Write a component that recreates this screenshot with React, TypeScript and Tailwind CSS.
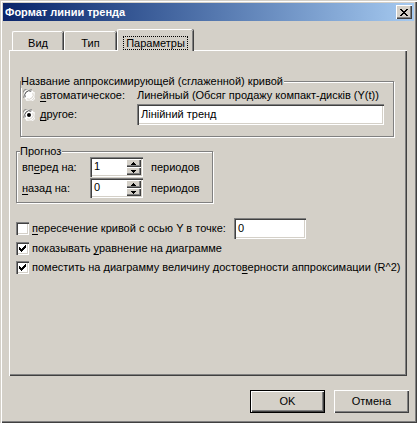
import React from "react";

const raised =
  "shadow-[inset_1px_1px_0_#ffffff,inset_-1px_-1px_0_#404040,inset_-2px_-2px_0_#808080]";
const sunken =
  "shadow-[inset_1px_1px_0_#808080,inset_2px_2px_0_#404040,inset_-1px_-1px_0_#ffffff,inset_-2px_-2px_0_#d4d0c8]";
const etched =
  "border border-[#808080] shadow-[inset_1px_1px_0_#ffffff,1px_1px_0_#ffffff]";

const U = ({ children }: { children: React.ReactNode }) => (
  <span className="underline underline-offset-[2px]">{children}</span>
);

const Radio = ({ checked }: { checked?: boolean }) => (
  <svg width="12" height="12" viewBox="0 0 12 12" className="shrink-0">
    <circle cx="6" cy="6" r="5.5" fill="#ffffff" />
    <path d="M1.2 9 A5.5 5.5 0 0 1 9 1.2" fill="none" stroke="#808080" strokeWidth="1" />
    <path d="M2.2 8.2 A4.5 4.5 0 0 1 8.2 2.2" fill="none" stroke="#404040" strokeWidth="1" />
    <path d="M10.8 3 A5.5 5.5 0 0 1 3 10.8" fill="none" stroke="#ffffff" strokeWidth="1" />
    <path d="M9.8 3.8 A4.5 4.5 0 0 1 3.8 9.8" fill="none" stroke="#d4d0c8" strokeWidth="1" />
    {checked && <circle cx="6" cy="6" r="2" fill="#000000" />}
  </svg>
);

const Check = ({ checked }: { checked?: boolean }) => (
  <div className={`w-[13px] h-[13px] bg-white shrink-0 ${sunken} flex items-center justify-center`}>
    {checked && (
      <svg width="7" height="7" viewBox="0 0 7 7">
        <path d="M0 2h1v1h1v1h1v-1h1v-1h1v-1h1v-1h1v3h-1v1h-1v1h-1v1h-1v1h-1v-1h-1v-1h-1z" fill="#000" />
      </svg>
    )}
  </div>
);

const Spin = ({ value }: { value: string }) => (
  <div className={`w-[53px] h-[20px] bg-white flex ${sunken}`}>
    <span className="flex-1 pl-[4px] pt-[3px] leading-[13px]">{value}</span>
    <div className="flex flex-col py-[2px] pr-[2px]">
      <div className={`w-[15px] h-[8px] bg-[#d4d0c8] flex items-center justify-center ${raised}`}>
        <svg width="5" height="3" viewBox="0 0 5 3">
          <path d="M2 0h1v1h1v1h1v1h-5v-1h1v-1h1z" fill="#000" />
        </svg>
      </div>
      <div className={`w-[15px] h-[8px] bg-[#d4d0c8] flex items-center justify-center ${raised}`}>
        <svg width="5" height="3" viewBox="0 0 5 3">
          <path d="M0 0h5v1h-1v1h-1v1h-1v-1h-1v-1h-1z" fill="#000" />
        </svg>
      </div>
    </div>
  </div>
);

export default function App() {
  return (
    <div
      className={`w-[417px] h-[423px] bg-[#d4d0c8] flex flex-col text-[11px] leading-[13px] text-black font-['Liberation_Sans',Arial,sans-serif] shadow-[inset_1px_1px_0_#d4d0c8,inset_2px_2px_0_#ffffff,inset_-1px_-1px_0_#404040,inset_-2px_-2px_0_#808080]`}
    >
      {/* Title bar */}
      <div className="mx-[3px] mt-[3px] h-[18px] flex items-center bg-linear-to-r from-[#0a246a] to-[#a6caf0]">
        <span className="pl-[2px] text-white font-bold text-[11px]">Формат линии тренда</span>
        <div className={`ml-auto mr-[2px] w-[16px] h-[14px] bg-[#d4d0c8] flex items-center justify-center ${raised}`}>
          <svg width="8" height="7" viewBox="0 0 8 7">
            <path
              d="M0 0h2v1h1v1h2v-1h1v-1h2v1h-1v1h-1v1h-1v1h1v1h1v1h1v1h-2v-1h-1v-1h-2v1h-1v1h-2v-1h1v-1h1v-1h1v-1h-1v-1h-1v-1h-1z"
              fill="#000"
            />
          </svg>
        </div>
      </div>

      {/* Tabs */}
      <div className="mt-[8px] ml-[12px] h-[21px] flex items-end">
        <div className="w-[51px] h-[19px] pt-[5px] text-center rounded-t-[2px] border-l border-t border-white shadow-[inset_-1px_0_0_#808080,1px_0_0_#404040]">
          Вид
        </div>
        <div className="ml-[1px] w-[52px] h-[19px] pt-[5px] text-center rounded-t-[2px] border-l border-t border-white shadow-[inset_-1px_0_0_#808080,1px_0_0_#404040]">
          Тип
        </div>
        <div className="relative z-10 -mb-px ml-[1px] w-[76px] h-[22px] pt-[6px] flex justify-center items-start bg-[#d4d0c8] rounded-t-[2px] border-l border-t border-white shadow-[inset_-1px_0_0_#808080,1px_0_0_#404040]">
          <span className="h-[14px] px-[2px] border border-dotted border-black leading-[12px]">Параметры</span>
        </div>
      </div>

      {/* Panel */}
      <div className="ml-[9px] w-[398px] h-[326px] flex flex-col shadow-[inset_1px_1px_0_#ffffff,inset_-1px_-1px_0_#404040,inset_-2px_-2px_0_#808080]">
        {/* Group 1 */}
        <div className={`relative ml-[11px] mt-[31px] w-[374px] h-[56px] ${etched}`}>
          <span className="absolute -top-[7px] left-0 bg-[#d4d0c8] pr-[1px]">
            Название аппроксимирующей (сглаженной) кривой
          </span>
          <div className="pl-[2px] pt-[6px] flex items-center h-[20px]">
            <Radio />
            <span className="ml-[5px] w-[97px]">
              <U>а</U>втоматическое:
            </span>
            <span>Линейный (Обсяг продажу компакт-дисків (Y(t))</span>
          </div>
          <div className="pl-[2px] mt-[2px] flex items-center h-[21px]">
            <Radio checked />
            <span className="ml-[5px] w-[97px]">
              <U>д</U>ругое:
            </span>
            <div className={`w-[247px] h-[21px] bg-white pl-[4px] pt-[4px] ${sunken}`}>Лінійний тренд</div>
          </div>
        </div>

        {/* Group 2 */}
        <div className={`relative ml-[7px] mt-[14px] w-[197px] h-[52px] ${etched}`}>
          <span className="absolute -top-[7px] left-[3px] bg-[#d4d0c8] pr-[1px]">Прогноз</span>
          <div className="pl-[5px] pt-[5px] flex items-center">
            <span className="w-[68px]">
              вп<U>е</U>ред на:
            </span>
            <Spin value="1" />
            <span className="ml-[8px]">периодов</span>
          </div>
          <div className="pl-[5px] mt-[1px] flex items-center">
            <span className="w-[68px]">
              <U>н</U>азад на:
            </span>
            <Spin value="0" />
            <span className="ml-[8px]">периодов</span>
          </div>
        </div>

        {/* Checkboxes */}
        <div className="ml-[7px] mt-[15px] flex flex-col">
          <div className="h-[21px] flex items-center">
            <Check />
            <span className="ml-[3px]">
              <U>п</U>ересечение кривой с осью Y в точке:
            </span>
            <div className={`ml-[8px] w-[72px] h-[21px] bg-white pl-[4px] pt-[4px] ${sunken}`}>0</div>
          </div>
          <div className="h-[19px] flex items-center">
            <Check checked />
            <span className="ml-[3px]">
              показывать <U>у</U>равнение на диаграмме
            </span>
          </div>
          <div className="h-[19px] flex items-center">
            <Check checked />
            <span className="ml-[3px]">
              поместить на диаграмму величину досто<U>в</U>ерности аппроксимации (R^2)
            </span>
          </div>
        </div>
      </div>

      {/* Buttons */}
      <div className="mt-[14px] pr-[8px] flex justify-end gap-[9px]">
        <div className="w-[75px] h-[23px] border border-black">
          <div className={`w-full h-full flex items-center justify-center ${raised}`}>OK</div>
        </div>
        <div className={`w-[75px] h-[23px] flex items-center justify-center ${raised}`}>Отмена</div>
      </div>
    </div>
  );
}
